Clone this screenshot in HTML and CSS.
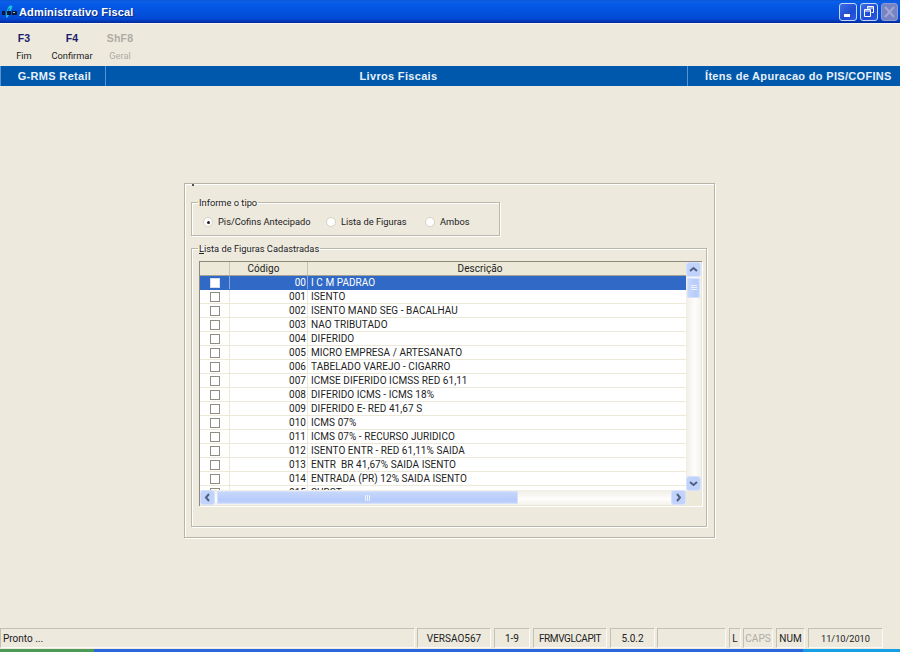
FILE: index.html
```html
<!DOCTYPE html>
<html lang="pt">
<head>
<meta charset="utf-8">
<title>Administrativo Fiscal</title>
<link rel="stylesheet" href="styles.css">
</head>
<body>
<div class="app">
  <header class="titlebar">
    <svg class="appicon" width="16" height="16" viewBox="0 0 16 16"><path d="M7 2 C10 1 11 2 10 4 L6 13 L4 14 C4 9 5 5 7 2 Z" fill="#19c2dc"/><path d="M6 5 L8 4 L6 10 Z" fill="#0a78b8"/><rect x="0" y="7" width="3" height="4" fill="#0d1c33"/><rect x="5" y="7" width="4" height="4" fill="#0d1c33"/><rect x="10" y="7" width="5" height="4" fill="#0d1c33"/><rect x="11" y="8" width="2" height="1" fill="#9fc0e8"/></svg>
    <span class="title">Administrativo Fiscal</span>
    <div class="winbtns">
      <span class="winbtn"><svg width="18" height="18" viewBox="0 0 18 18"><rect x="5" y="11" width="6" height="3" fill="#fff"/></svg></span>
      <span class="winbtn"><svg width="18" height="18" viewBox="0 0 18 18"><path d="M7.5 3.5h6v6h-2M7.5 5h6M7.5 3.5v2" fill="none" stroke="#fff"/><path d="M4.5 6.5h6v7h-6zM4.5 8h6" fill="none" stroke="#fff"/></svg></span>
      <span class="winbtn off"><svg width="17" height="18" viewBox="0 0 17 18"><path d="M4 4L13 14M13 4L4 14" stroke="#a2a8d2" stroke-width="2"/></svg></span>
    </div>
  </header>
  <nav class="toolbar">
    <div class="tool"><b>F3</b><span>Fim</span></div>
    <div class="tool"><b>F4</b><span>Confirmar</span></div>
    <div class="tool off"><b>ShF8</b><span>Geral</span></div>
  </nav>
  <div class="bluebar">
    <div class="bb bb1">G-RMS Retail</div>
    <div class="bb bb2">Livros Fiscais</div>
    <div class="bb bb3">Ítens de Apuracao do PIS/COFINS</div>
  </div>
  <main class="main">
    <section class="panel">
      <i class="tick"></i>
      <fieldset class="group group-type">
        <legend>Informe o tipo</legend>
        <label class="radio r1"><i class="dot on"></i>Pis/Cofins Antecipado</label>
        <label class="radio r2"><i class="dot"></i>Lista de Figuras</label>
        <label class="radio r3"><i class="dot"></i>Ambos</label>
      </fieldset>
      <fieldset class="group group-list">
        <legend><u>L</u>ista de Figuras Cadastradas</legend>
        <div class="grid">
          <div class="gridmain">
            <div class="row head"><span class="c0"></span><span class="c1">Código</span><span class="c2">Descrição</span></div>
            <div class="rows">
              <div class="row sel"><span class="c0"><i class="chk"></i></span><span class="c1">00</span><span class="c2">I C M PADRAO</span></div>
              <div class="row"><span class="c0"><i class="chk"></i></span><span class="c1">001</span><span class="c2">ISENTO</span></div>
              <div class="row"><span class="c0"><i class="chk"></i></span><span class="c1">002</span><span class="c2">ISENTO MAND SEG - BACALHAU</span></div>
              <div class="row"><span class="c0"><i class="chk"></i></span><span class="c1">003</span><span class="c2">NAO TRIBUTADO</span></div>
              <div class="row"><span class="c0"><i class="chk"></i></span><span class="c1">004</span><span class="c2">DIFERIDO</span></div>
              <div class="row"><span class="c0"><i class="chk"></i></span><span class="c1">005</span><span class="c2">MICRO EMPRESA / ARTESANATO</span></div>
              <div class="row"><span class="c0"><i class="chk"></i></span><span class="c1">006</span><span class="c2">TABELADO VAREJO - CIGARRO</span></div>
              <div class="row"><span class="c0"><i class="chk"></i></span><span class="c1">007</span><span class="c2">ICMSE DIFERIDO ICMSS RED 61,11</span></div>
              <div class="row"><span class="c0"><i class="chk"></i></span><span class="c1">008</span><span class="c2">DIFERIDO ICMS - ICMS 18%</span></div>
              <div class="row"><span class="c0"><i class="chk"></i></span><span class="c1">009</span><span class="c2">DIFERIDO E- RED 41,67 S</span></div>
              <div class="row"><span class="c0"><i class="chk"></i></span><span class="c1">010</span><span class="c2">ICMS 07%</span></div>
              <div class="row"><span class="c0"><i class="chk"></i></span><span class="c1">011</span><span class="c2">ICMS 07% - RECURSO JURIDICO</span></div>
              <div class="row"><span class="c0"><i class="chk"></i></span><span class="c1">012</span><span class="c2">ISENTO ENTR - RED 61,11% SAIDA</span></div>
              <div class="row"><span class="c0"><i class="chk"></i></span><span class="c1">013</span><span class="c2">ENTR&nbsp; BR 41,67% SAIDA ISENTO</span></div>
              <div class="row"><span class="c0"><i class="chk"></i></span><span class="c1">014</span><span class="c2">ENTRADA (PR) 12% SAIDA ISENTO</span></div>
              <div class="row"><span class="c0"><i class="chk"></i></span><span class="c1">015</span><span class="c2">SUBST</span></div>
            </div>
            <div class="hscroll">
              <span class="sbtn"><svg width="13" height="13" viewBox="0 0 13 13"><path d="M8 3L5 6.5L8 10" fill="none" stroke="#4d6185" stroke-width="2"/></svg></span>
              <span class="hthumb"><svg width="8" height="8" viewBox="0 0 8 8"><path d="M1.5 1v6M3.5 1v6M5.5 1v6" stroke="#eef3ff"/></svg></span>
              <span class="hspace"></span>
              <span class="sbtn"><svg width="13" height="13" viewBox="0 0 13 13"><path d="M5 3L8 6.5L5 10" fill="none" stroke="#4d6185" stroke-width="2"/></svg></span>
            </div>
          </div>
          <div class="vscroll">
            <span class="sbtn"><svg width="13" height="13" viewBox="0 0 13 13"><path d="M3 8L6.5 5L10 8" fill="none" stroke="#4d6185" stroke-width="2"/></svg></span>
            <span class="vthumb"><svg width="8" height="8" viewBox="0 0 8 8"><path d="M1 1.5h6M1 3.5h6M1 5.5h6" stroke="#eef3ff"/></svg></span>
            <span class="vspace"></span>
            <span class="sbtn"><svg width="13" height="13" viewBox="0 0 13 13"><path d="M3 5L6.5 8L10 5" fill="none" stroke="#4d6185" stroke-width="2"/></svg></span>
            <span class="corner"></span>
          </div>
        </div>
      </fieldset>
    </section>
  </main>
  <footer class="status">
    <span class="cell s-msg">Pronto ...</span>
    <span class="cell s-ver">VERSAO567</span>
    <span class="cell s-rng">1-9</span>
    <span class="cell s-frm">FRMVGLCAPIT</span>
    <span class="cell s-rel">5.0.2</span>
    <span class="cell s-blank"></span>
    <span class="cell s-l">L</span>
    <span class="cell s-caps">CAPS</span>
    <span class="cell s-num">NUM</span>
    <span class="cell s-date">11/10/2010</span>
  </footer>
  <div class="taskbar"><span class="start"></span><span class="tray"></span></div>
</div>
</body>
</html>
```
FILE: styles.css
```css
* { box-sizing: border-box; }
html, body { margin: 0; height: 100%; }
body { background: #ece9d8; font-family: Roboto, "Liberation Sans", Arial, sans-serif; font-size: 10px; color: #111; overflow: hidden; }
.app { width: 900px; height: 652px; display: flex; flex-direction: column; background: #ede9dd; }

.titlebar { height: 23px; flex: none; display: flex; align-items: center; padding: 0 0 0 2px; color: #fff; font-family: "Liberation Sans", Arial, sans-serif;
  background: linear-gradient(#0a56d8 0, #0a5fe8 2px, #0458e6 5px, #0350dc 14px, #0348d4 19px, #0232a8 22px, #02279a 23px); }
.appicon { flex: none; }
.title { margin-left: 1px; font-size: 11px; font-weight: bold; letter-spacing: .15px; text-shadow: 1px 1px 0 #0a2a80; }
.winbtns { margin-left: auto; display: flex; gap: 3px; padding-right: 2px; }
.winbtn { width: 18px; height: 18px; border: 1px solid #c6d6f6; border-radius: 3px; background: linear-gradient(135deg, #3a6ee8, #1f4cd0 60%, #2d5ce0); display: block; }
.winbtn svg { display: block; margin: -1px; }
.winbtn.off { width: 17px; background: #7683c4; border-color: #8e9ad0; }

.toolbar { height: 43px; flex: none; display: flex; padding: 8px 0 0 0; background: #ede9dd; border-top: 1px solid #f8f6ef; }
.tool { width: 48px; display: flex; flex-direction: column; align-items: center; gap: 6px; font-size: 9.3px; line-height: 12px; color: #222; white-space: nowrap; }
.tool b { color: #1b1b6b; font-family: "Liberation Sans", Arial, sans-serif; font-size: 10.5px; letter-spacing: .2px; }
.tool.off b, .tool.off span { color: #aeaca4; }

.bluebar { height: 20px; flex: none; display: flex; background: #0058ac; color: #e8f0f8; font-family: "Liberation Sans", Arial, sans-serif; font-size: 11px; font-weight: bold; letter-spacing: .32px; }
.bb { display: flex; align-items: center; justify-content: center; }
.bb1 { width: 106px; border-left: 1px solid #5b92cc; border-right: 1px solid #5b92cc; padding-left: 3px; }
.bb2 { width: 581px; padding-left: 4px; }
.bb3 { flex: 1; border-left: 1px solid #5b92cc; justify-content: flex-start; padding-left: 17px; white-space: nowrap; }

.main { flex: 1; padding: 97px 0 0 184px; min-height: 0; }
.panel { width: 531px; height: 355px; border: 1px solid #b9b5a5; box-shadow: inset 1px 1px 0 #fff, 1px 1px 0 #fff; padding: 13px 7px 0 6px; position: relative; }
.tick { position: absolute; left: 7px; top: 0; width: 2px; height: 2px; background: #55534a; }
.group { margin: 0; padding: 0; border: 1px solid #bcb8a8; box-shadow: inset 1px 1px 0 #fff, 1px 1px 0 #fff; position: relative; }
.group legend { margin-left: 6px; padding: 0 1px; font-size: 9.3px; line-height: 11px; color: #222; }
.group-type { width: 309px; height: 39px; }
.radio { position: absolute; top: 8px; display: flex; align-items: center; gap: 5px; font-size: 9.3px; line-height: 12px; color: #222; white-space: nowrap; }
.r1 { left: 11px; }
.r2 { left: 134px; }
.r3 { left: 233px; }
.dot { width: 10px; height: 10px; border-radius: 50%; background: #fff; border: 1px solid #d5d2c4; display: block; flex: none; position: relative; }
.dot.on::after { content: ""; position: absolute; left: 2.5px; top: 2.5px; width: 3px; height: 3px; border-radius: 50%; background: #222; }

.group-list { width: 516px; height: 284px; margin-top: 7px; }
.grid { position: absolute; left: 7px; top: 7px; width: 503px; height: 245px; display: flex; border-top: 1px solid #8d8a7d; border-left: 1px solid #8d8a7d; background: #eae7da; box-shadow: 1px 1px 0 #fff; }
.gridmain { width: 486px; flex: none; display: flex; flex-direction: column; }
.row { display: flex; height: 14px; background: #fff; border-bottom: 1px solid #ece9d8; font-size: 10px; line-height: 13px; letter-spacing: .05px; color: #222; flex: none; }
.row span { display: block; height: 13px; white-space: nowrap; }
.row .c0 { width: 30px; border-right: 1px solid #ece9d8; display: flex; align-items: center; justify-content: center; }
.row .c1 { width: 78px; text-align: right; padding-right: 1px; border-right: 1px solid #ece9d8; }
.row .c2 { flex: 1; padding-left: 3px; }
.row.head { height: 14px; background: #ece9d8; border-bottom: 1px solid #a5a293; }
.row.head span { height: 13px; border-right: 1px solid #c9c5b4; }
.row.head .c1 { text-align: center; padding: 0 10px 0 0; }
.row.head .c2 { text-align: center; border-right: 0; padding: 0 34px 0 0; }
.rows { height: 214px; overflow: hidden; flex: none; }
.row.sel { background: #3169c6; color: #fff; border-bottom-color: #3169c6; }
.row.sel .c0, .row.sel .c1 { border-right-color: #8aa8dc; }
.chk { width: 10px; height: 10px; display: block; background: #fff; border: 1px solid #8f8d82; }
.sel .chk { border-color: #d6dff0; }

.hscroll { height: 15px; flex: none; display: flex; align-items: center; background: linear-gradient(#f0eee4, #fefdfc 60%, #f4f2ea); }
.vscroll { width: 15px; flex: none; display: flex; flex-direction: column; background: linear-gradient(90deg, #f0eee4, #fefdfc 60%, #f4f2ea); }
.sbtn { width: 13px; height: 13px; margin: 1px; flex: none; display: block; background: #c1d3fb; border-radius: 2px; box-shadow: 0 0 0 1px #d6e2fd; }
.sbtn svg, .hthumb svg, .vthumb svg { display: block; }
.hthumb { width: 301px; height: 13px; flex: none; margin-left: 2px; display: flex; align-items: center; justify-content: center; background: linear-gradient(#c9d9fc, #b6cbfa 70%, #c6d6fb); border-radius: 2px; box-shadow: inset 0 0 0 1px #d4e0fd; }
.hspace { flex: 1; }
.vthumb { width: 13px; height: 20px; flex: none; margin: 1px 1px 0; display: flex; align-items: center; justify-content: center; background: linear-gradient(90deg, #c9d9fc, #b6cbfa 70%, #c6d6fb); border-radius: 2px; box-shadow: inset 0 0 0 1px #d4e0fd; }
.vspace { flex: 1; }
.corner { height: 15px; flex: none; background: #ece9d8; }

.status { height: 20px; flex: none; display: flex; font-size: 10px; color: #222; }
.cell { display: flex; align-items: center; justify-content: center; height: 20px; border: 1px solid; border-color: #c4c1b2 #fbfaf6 #fbfaf6 #c4c1b2; white-space: nowrap; flex: none; }
.s-msg { width: 415px; justify-content: flex-start; padding-left: 2px; margin-right: 2px; }
.s-ver { width: 74px; margin-right: 3px; }
.s-rng { width: 36px; margin-right: 3px; }
.s-frm { width: 74px; margin-right: 3px; letter-spacing: -.4px; }
.s-rel { width: 45px; margin-right: 2px; }
.s-blank { width: 69px; margin-right: 3px; }
.s-l { width: 12px; margin-right: 2px; }
.s-caps { width: 30px; margin-right: 3px; color: #aeaca4; }
.s-num { width: 29px; margin-right: 3px; }
.s-date { width: 75px; font-size: 9.2px; }

.taskbar { height: 4px; flex: none; background: #2a66dc; display: flex; justify-content: space-between; border-top: 1px solid #ede9dd; }
.start { width: 94px; background: #4c9a55; }
.tray { width: 97px; background: #15a0e6; }
```
